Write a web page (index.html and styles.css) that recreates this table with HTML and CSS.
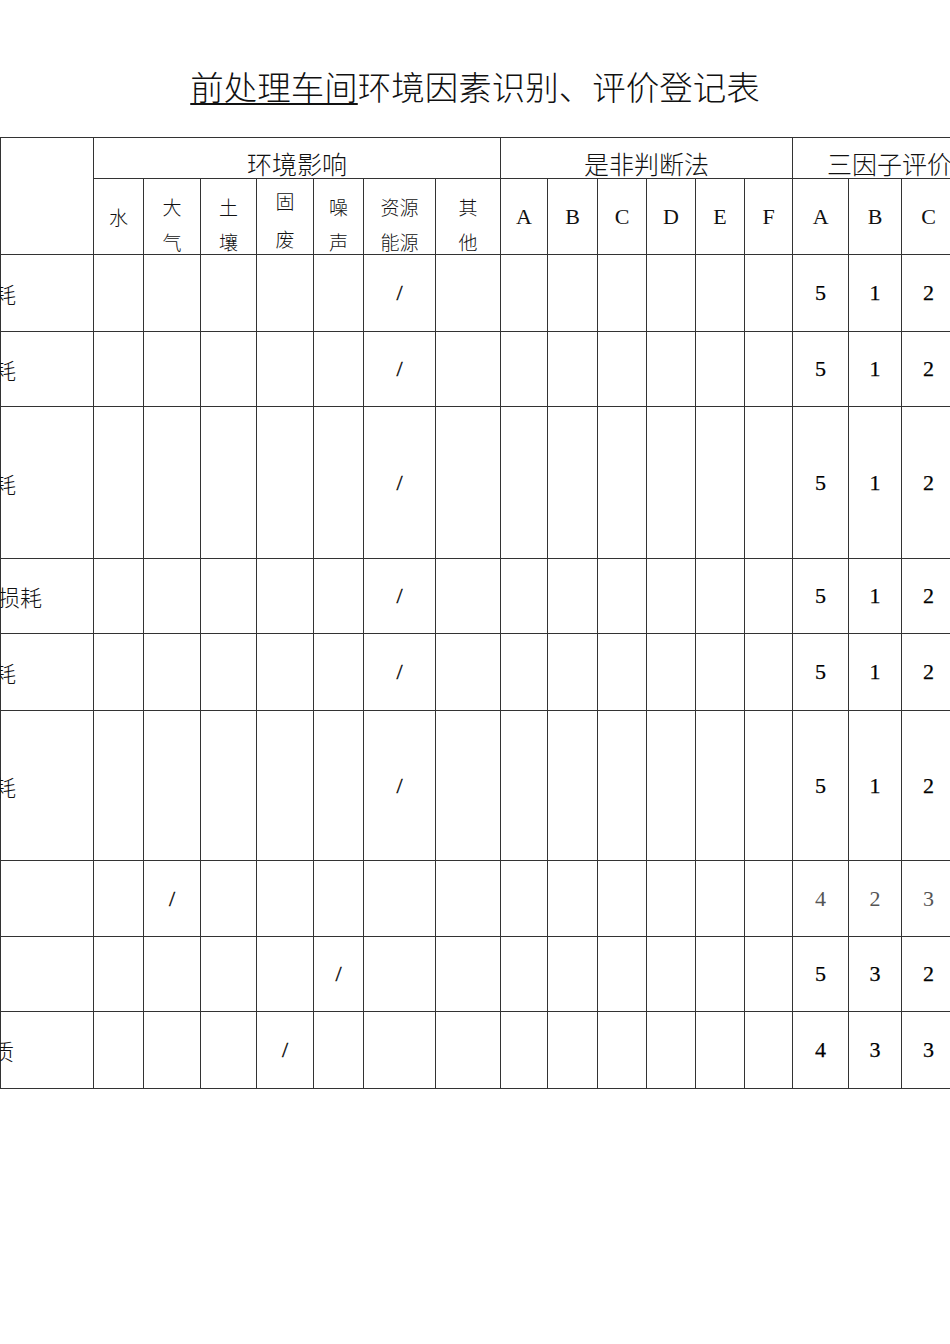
FILE: index.html
```html
<!DOCTYPE html>
<html lang="zh-CN">
<head>
<meta charset="utf-8">
<title>前处理车间环境因素识别、评价登记表</title>
<link rel="stylesheet" href="styles.css">
</head>
<body>
<div class="page">
  <h1 class="title"><span class="ul">前处理车间</span>环境因素识别、评价登记表</h1>
  <table class="reg">
    <colgroup>
      <col class="w93"><col class="w50"><col class="w57"><col class="w56"><col class="w57"><col class="w50"><col class="w72"><col class="w65">
      <col class="w47"><col class="w50"><col class="w49"><col class="w49"><col class="w49"><col class="w48">
      <col class="w56"><col class="w53"><col class="w54"><col class="w60">
    </colgroup>
    <thead>
      <tr class="hr1">
        <th rowspan="2" class="cn"></th>
        <th colspan="7" class="grp">环境影响</th>
        <th colspan="6" class="grp">是非判断法</th>
        <th colspan="4" class="grp grp-left">三因子评价</th>
      </tr>
      <tr class="hr2">
        <th class="sub">水</th>
        <th class="sub stack"><span class="ln">大</span><span class="ln">气</span></th>
        <th class="sub stack"><span class="ln">土</span><span class="ln">壤</span></th>
        <th class="sub stack up"><span class="ln">固</span><span class="ln">废</span></th>
        <th class="sub stack"><span class="ln">噪</span><span class="ln">声</span></th>
        <th class="sub stack"><span class="ln">资源</span><span class="ln">能源</span></th>
        <th class="sub stack"><span class="ln">其</span><span class="ln">他</span></th>
        <th class="lt">A</th><th class="lt">B</th><th class="lt">C</th><th class="lt">D</th><th class="lt">E</th><th class="lt">F</th>
        <th class="lt">A</th><th class="lt">B</th><th class="lt">C</th><th class="lt">总分</th>
      </tr>
    </thead>
    <tbody>
      <tr class="r77">
        <td class="nm"><div class="nmt p77">电能消耗</div></td>
        <td></td><td></td><td></td><td></td><td></td><td class="mk">/</td><td></td>
        <td></td><td></td><td></td><td></td><td></td><td></td>
        <td class="num">5</td><td class="num">1</td><td class="num">2</td><td></td>
      </tr>
      <tr class="r75">
        <td class="nm"><div class="nmt p77">水资源消耗</div></td>
        <td></td><td></td><td></td><td></td><td></td><td class="mk">/</td><td></td>
        <td></td><td></td><td></td><td></td><td></td><td></td>
        <td class="num">5</td><td class="num">1</td><td class="num">2</td><td></td>
      </tr>
      <tr class="r152">
        <td class="nm"><div class="nmt p77">蒸汽消耗</div></td>
        <td></td><td></td><td></td><td></td><td></td><td class="mk">/</td><td></td>
        <td></td><td></td><td></td><td></td><td></td><td></td>
        <td class="num">5</td><td class="num">1</td><td class="num">2</td><td></td>
      </tr>
      <tr class="r75">
        <td class="nm"><div class="nmt p51">原材料损耗</div></td>
        <td></td><td></td><td></td><td></td><td></td><td class="mk">/</td><td></td>
        <td></td><td></td><td></td><td></td><td></td><td></td>
        <td class="num">5</td><td class="num">1</td><td class="num">2</td><td></td>
      </tr>
      <tr class="r77">
        <td class="nm"><div class="nmt p77">纸张消耗</div></td>
        <td></td><td></td><td></td><td></td><td></td><td class="mk">/</td><td></td>
        <td></td><td></td><td></td><td></td><td></td><td></td>
        <td class="num">5</td><td class="num">1</td><td class="num">2</td><td></td>
      </tr>
      <tr class="r150">
        <td class="nm"><div class="nmt p77">化学品消耗</div></td>
        <td></td><td></td><td></td><td></td><td></td><td class="mk">/</td><td></td>
        <td></td><td></td><td></td><td></td><td></td><td></td>
        <td class="num">5</td><td class="num">1</td><td class="num">2</td><td></td>
      </tr>
      <tr class="r76">
        <td class="nm"></td>
        <td></td><td class="mk">/</td><td></td><td></td><td></td><td></td><td></td>
        <td></td><td></td><td></td><td></td><td></td><td></td>
        <td class="num light">4</td><td class="num light">2</td><td class="num light">3</td><td></td>
      </tr>
      <tr class="r75">
        <td class="nm"></td>
        <td></td><td></td><td></td><td></td><td class="mk">/</td><td></td><td></td>
        <td></td><td></td><td></td><td></td><td></td><td></td>
        <td class="num">5</td><td class="num">3</td><td class="num">2</td><td></td>
      </tr>
      <tr class="r77">
        <td class="nm"><div class="nmt p79">固体废物质</div></td>
        <td></td><td></td><td></td><td class="mk">/</td><td></td><td></td><td></td>
        <td></td><td></td><td></td><td></td><td></td><td></td>
        <td class="num">4</td><td class="num">3</td><td class="num">3</td><td></td>
      </tr>
    </tbody>
  </table>
</div>
</body>
</html>
```
FILE: styles.css
```css
html, body {
  margin: 0;
  padding: 0;
  background: #ffffff;
  overflow: hidden;
}

body {
  width: 950px;
  height: 1344px;
  font-family: "Noto Sans CJK SC", "Liberation Serif", sans-serif;
  color: #111111;
}

.page {
  width: 950px;
  overflow: hidden;
}

.title {
  margin: 66px 0 31px 0;
  height: 40px;
  line-height: 40px;
  font-size: 33.5px;
  font-weight: 300;
  text-align: center;
  white-space: nowrap;
}

.ul {
  text-decoration: underline;
  text-decoration-thickness: 1.5px;
  text-underline-offset: 3px;
}

.reg {
  border-collapse: collapse;
  table-layout: fixed;
  width: 1015px;
}

th,
td {
  border: 1px solid #333333;
  padding: 0;
  text-align: center;
  vertical-align: middle;
  font-weight: normal;
}

.w93 { width: 93px; }
.w50 { width: 50px; }
.w57 { width: 57px; }
.w56 { width: 56px; }
.w72 { width: 72px; }
.w65 { width: 65px; }
.w47 { width: 47px; }
.w49 { width: 49px; }
.w48 { width: 48px; }
.w53 { width: 53px; }
.w54 { width: 54px; }
.w60 { width: 60px; }

.hr1 { height: 41px; }
.hr2 { height: 76px; }
.r77 { height: 77px; }
.r75 { height: 75px; }
.r76 { height: 76px; }
.r152 { height: 152px; }
.r150 { height: 150px; }

.grp {
  font-size: 25px;
  font-weight: 300;
  line-height: 26px;
  padding-top: 9px;
  white-space: nowrap;
}

.grp-left {
  text-align: left;
  padding-left: 34px;
}

.sub {
  font-size: 19px;
  font-weight: 300;
  line-height: 19px;
}

.stack {
  vertical-align: top;
  padding-top: 18px;
}

.ln {
  display: block;
}

.ln + .ln {
  margin-top: 16px;
}

.stack.up {
  padding-top: 12px;
}

.up .ln + .ln {
  margin-top: 19px;
}

.lt {
  font-family: "Liberation Serif", serif;
  font-size: 22px;
}

.nm {
  overflow: visible;
}

.nmt {
  display: flex;
  justify-content: flex-end;
  white-space: nowrap;
  font-size: 22px;
  font-weight: 300;
}

.p77 { padding-right: 77px; }
.p51 { padding-right: 51px; }
.p79 { padding-right: 79px; }

.mk {
  font-family: "Liberation Serif", serif;
  font-size: 22px;
  color: #000000;
  -webkit-text-stroke: 0.3px #000000;
}

.num {
  font-family: "Liberation Serif", serif;
  font-size: 22px;
  color: #000000;
  -webkit-text-stroke: 0.25px #000000;
}

.num.light {
  color: #555555;
  -webkit-text-stroke: 0;
}
```
